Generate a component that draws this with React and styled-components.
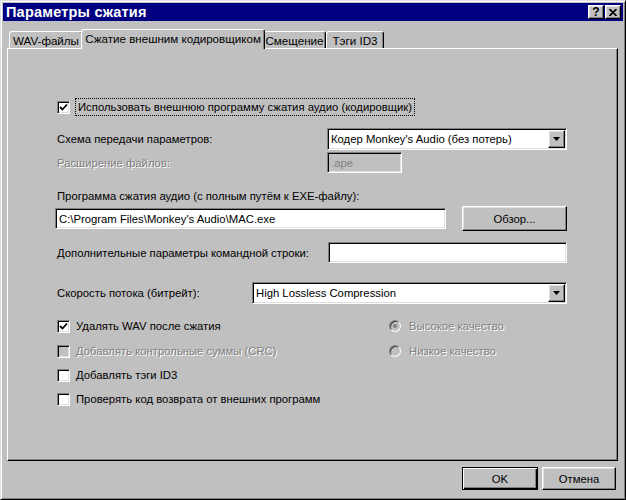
import React from 'react';
import styled, { createGlobalStyle, css } from 'styled-components';

const GlobalStyle = createGlobalStyle`
  html, body {
    margin: 0;
    padding: 0;
    background: #c0c0c0;
  }
  body {
    font-family: "Liberation Sans", Arial, sans-serif;
    font-size: 11.3px;
    color: #000;
  }
  * { box-sizing: border-box; }
`;

const sunken = css`
  border: 1px solid;
  border-color: #808080 #fff #fff #808080;
  box-shadow: inset 1px 1px #000, inset -1px -1px #dfdfdf;
`;

const raised = css`
  border: 1px solid;
  border-color: #fff #000 #000 #fff;
  box-shadow: inset -1px -1px #808080, inset 1px 1px #dfdfdf;
`;

const Window = styled.div`
  width: 626px;
  height: 500px;
  background: #c0c0c0;
  border: 1px solid;
  border-color: #dfdfdf #000 #000 #dfdfdf;
  box-shadow: inset 1px 1px #fff, inset -1px -1px #808080;
  padding: 2px;
  display: flex;
  flex-direction: column;
`;

const TitleBar = styled.div`
  height: 18px;
  background: #000080;
  color: #fff;
  display: flex;
  align-items: center;
  padding: 0 2px 0 3px;
`;

const Title = styled.div`
  flex: 1;
  font-weight: bold;
  font-size: 14.5px;
  letter-spacing: 0.2px;
`;

const CaptionButtons = styled.div`
  display: flex;
  gap: 1px;
`;

const CaptionButton = styled.div`
  ${raised};
  width: 16px;
  height: 14px;
  background: #c0c0c0;
  color: #000;
  display: flex;
  align-items: center;
  justify-content: center;
  font-weight: bold;
  font-size: 12px;
  line-height: 1;
`;

const Body = styled.div`
  flex: 1;
  display: flex;
  flex-direction: column;
  padding: 0 5px 0 4px;
`;

const TabStrip = styled.div`
  height: 27px;
  display: flex;
  align-items: flex-end;
  padding-left: 2px;
`;

const Tab = styled.div`
  position: relative;
  width: ${(p) => p.$w}px;
  height: ${(p) => (p.$active ? 20 : 17)}px;
  margin: ${(p) => (p.$active ? '0 -2px -1px -2px' : '0')};
  z-index: ${(p) => (p.$active ? 2 : 1)};
  background: #c0c0c0;
  border-top: 1px solid #fff;
  border-left: 1px solid #fff;
  border-right: 1px solid #000;
  border-radius: 3px 3px 0 0;
  box-shadow: inset -1px 0 #808080;
  display: flex;
  align-items: center;
  justify-content: center;
  padding-bottom: ${(p) => (p.$active ? 3 : 0)}px;
  white-space: nowrap;
  font-size: 11.6px;
`;

const Panel = styled.div`
  height: 413px;
  border: 1px solid;
  border-color: #fff #000 #000 #fff;
  box-shadow: inset -1px -1px #808080;
  padding: 48px 48px 0 49px;
  display: flex;
  flex-direction: column;
`;

const Row = styled.div`
  display: flex;
  align-items: center;
  height: ${(p) => p.$h}px;
  margin-top: ${(p) => p.$mt || 0}px;
`;

const Label = styled.div`
  width: ${(p) => (p.$w ? `${p.$w}px` : 'auto')};
  flex-shrink: 0;
  white-space: nowrap;
  color: ${(p) => (p.$disabled ? '#808080' : '#000')};
  text-shadow: ${(p) => (p.$disabled ? '1px 1px #fff' : 'none')};
`;

const FocusLabel = styled.div`
  margin-left: 5px;
  padding: 1px 2px;
  border: 1px dotted #000;
  white-space: nowrap;
  line-height: 14px;
`;

const Field = styled.div`
  ${sunken};
  width: ${(p) => p.$w}px;
  height: ${(p) => p.$h || 21}px;
  margin-left: ${(p) => p.$ml || 0}px;
  background: ${(p) => (p.$disabled ? '#c0c0c0' : '#fff')};
  color: ${(p) => (p.$disabled ? '#808080' : '#000')};
  display: flex;
  align-items: center;
  padding: 0 3px;
  white-space: nowrap;
  overflow: hidden;
`;

const Combo = styled.div`
  ${sunken};
  width: ${(p) => p.$w}px;
  height: 22px;
  background: #fff;
  display: flex;
  align-items: center;
  padding: 1px 1px 1px 3px;
  white-space: nowrap;
`;

const ComboText = styled.div`
  flex: 1;
`;

const DropButton = styled.div`
  ${raised};
  width: 17px;
  height: 18px;
  background: #c0c0c0;
  display: flex;
  align-items: center;
  justify-content: center;
`;

const PushButton = styled.div`
  ${(p) =>
    p.$default
      ? css`
          border: 1px solid #000;
          box-shadow: inset 1px 1px #fff, inset -1px -1px #000, inset -2px -2px #808080;
        `
      : raised};
  width: ${(p) => p.$w}px;
  height: ${(p) => p.$h}px;
  margin-left: ${(p) => p.$ml || 0}px;
  background: #c0c0c0;
  display: flex;
  align-items: center;
  justify-content: center;
`;

const Options = styled.div`
  margin-top: 9px;
  display: grid;
  grid-template-columns: 332px 1fr;
  grid-template-rows: 26px 24px 24px 24px;
`;

const Option = styled.div`
  display: flex;
  align-items: center;
  color: ${(p) => (p.$disabled ? '#808080' : '#000')};
  text-shadow: ${(p) => (p.$disabled ? '1px 1px #fff' : 'none')};
  white-space: nowrap;
`;

const Box = styled.div`
  ${sunken};
  width: 13px;
  height: 13px;
  flex-shrink: 0;
  background: ${(p) => (p.$disabled ? '#c0c0c0' : '#fff')};
  display: flex;
  align-items: center;
  justify-content: center;
  margin-right: ${(p) => p.$gap ?? 6}px;
`;

const Radio = styled.div`
  width: 12px;
  height: 12px;
  flex-shrink: 0;
  border-radius: 50%;
  border: 1px solid;
  border-color: #808080 #fff #fff #808080;
  box-shadow: inset 1px 1px #404040;
  background: #c0c0c0;
  display: flex;
  align-items: center;
  justify-content: center;
  margin-right: 8px;
`;

const Dot = styled.div`
  width: 4px;
  height: 4px;
  border-radius: 50%;
  background: #808080;
`;

const Footer = styled.div`
  display: flex;
  justify-content: flex-end;
  gap: 4px;
  margin-top: 6px;
  padding-right: 2px;
`;

const Check = ({ disabled }) => (
  <svg width="9" height="9" viewBox="0 0 9 9">
    <path d="M1 4 L3.5 6.5 L8 1.5" fill="none" stroke={disabled ? '#808080' : '#000'} strokeWidth="1.8" />
  </svg>
);

const Arrow = () => (
  <svg width="7" height="4" viewBox="0 0 7 4">
    <path d="M0 0 H7 L3.5 4 Z" fill="#000" />
  </svg>
);

const CloseGlyph = () => (
  <svg width="8" height="7" viewBox="0 0 8 7">
    <path d="M0.5 0 L7.5 7 M7.5 0 L0.5 7" stroke="#000" strokeWidth="1.6" />
  </svg>
);

const CheckOption = ({ checked, disabled, children }) => (
  <Option $disabled={disabled}>
    <Box $disabled={disabled}>{checked && <Check disabled={disabled} />}</Box>
    {children}
  </Option>
);

const RadioOption = ({ checked, children }) => (
  <Option $disabled>
    <Radio>{checked && <Dot />}</Radio>
    {children}
  </Option>
);

export default function App() {
  return (
    <>
      <GlobalStyle />
      <Window>
        <TitleBar>
          <Title>Параметры сжатия</Title>
          <CaptionButtons>
            <CaptionButton>?</CaptionButton>
            <CaptionButton>
              <CloseGlyph />
            </CaptionButton>
          </CaptionButtons>
        </TitleBar>
        <Body>
          <TabStrip>
            <Tab $w={74}>WAV-файлы</Tab>
            <Tab $w={184} $active>
              Сжатие внешним кодировщиком
            </Tab>
            <Tab $w={63}>Смещение</Tab>
            <Tab $w={58}>Тэги ID3</Tab>
          </TabStrip>
          <Panel>
            <Row $h={20}>
              <Box $gap={0}>
                <Check />
              </Box>
              <FocusLabel>Использовать внешнюю программу сжатия аудио (кодировщик)</FocusLabel>
            </Row>
            <Row $h={22} $mt={11}>
              <Label $w={270}>Схема передачи параметров:</Label>
              <Combo $w={240}>
                <ComboText>Кодер Monkey's Audio (без потерь)</ComboText>
                <DropButton>
                  <Arrow />
                </DropButton>
              </Combo>
            </Row>
            <Row $h={21} $mt={2}>
              <Label $w={270} $disabled>
                Расширение файлов:
              </Label>
              <Field $w={75} $disabled>
                .ape
              </Field>
            </Row>
            <Row $h={14} $mt={16}>
              <Label>Программа сжатия аудио (с полным путём к EXE-файлу):</Label>
            </Row>
            <Row $h={25} $mt={3}>
              <Field $w={391} $ml={-2}>
                C:\Program Files\Monkey's Audio\MAC.exe
              </Field>
              <PushButton $w={105} $h={25} $ml={16}>
                Обзор...
              </PushButton>
            </Row>
            <Row $h={21} $mt={11}>
              <Label $w={271}>Дополнительные параметры командной строки:</Label>
              <Field $w={239} />
            </Row>
            <Row $h={22} $mt={19}>
              <Label $w={195}>Скорость потока (битрейт):</Label>
              <Combo $w={315}>
                <ComboText>High Lossless Compression</ComboText>
                <DropButton>
                  <Arrow />
                </DropButton>
              </Combo>
            </Row>
            <Options>
              <CheckOption checked>Удалять WAV после сжатия</CheckOption>
              <RadioOption checked>Высокое качество</RadioOption>
              <CheckOption disabled>Добавлять контрольные суммы (CRC)</CheckOption>
              <RadioOption>Низкое качество</RadioOption>
              <CheckOption>Добавлять тэги ID3</CheckOption>
              <div />
              <CheckOption>Проверять код возврата от внешних программ</CheckOption>
            </Options>
          </Panel>
          <Footer>
            <PushButton $w={76} $h={23} $default>
              OK
            </PushButton>
            <PushButton $w={74} $h={23}>
              Отмена
            </PushButton>
          </Footer>
        </Body>
      </Window>
    </>
  );
}
